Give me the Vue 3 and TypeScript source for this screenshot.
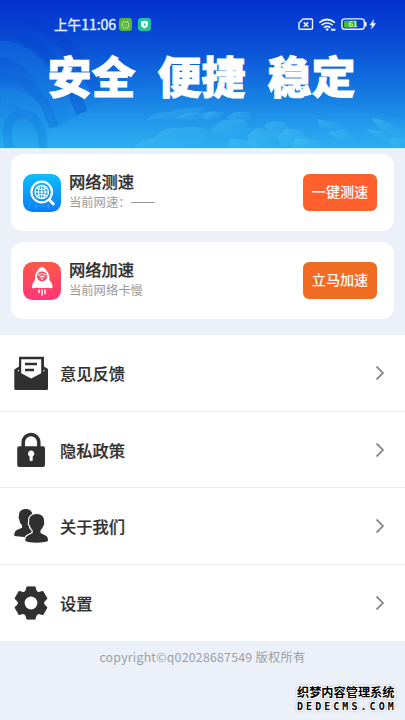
<script setup lang="ts">
type IconName = 'mail' | 'lock' | 'people' | 'gear'

interface MenuItem {
  label: string
  icon: IconName
}

interface Card {
  title: string
  note: string
  dash: string
  action: string
  kind: 'speed' | 'boost'
}

const slogans: string[] = ['安全', '便捷', '稳定']

const cards: Card[] = [
  { title: '网络测速', note: '当前网速：', dash: '——', action: '一键测速', kind: 'speed' },
  { title: '网络加速', note: '当前网络卡慢', dash: '', action: '立马加速', kind: 'boost' },
]

const menu: MenuItem[] = [
  { label: '意见反馈', icon: 'mail' },
  { label: '隐私政策', icon: 'lock' },
  { label: '关于我们', icon: 'people' },
  { label: '设置', icon: 'gear' },
]

const teeth: number[] = [0, 60, 120, 180, 240, 300]

const clouds: string[] = [
  'M132 148 Q142 138 154 138 Q162 126 182 128 Q196 124 210 132 L204 148Z',
  'M146 120 Q156 111 170 112 Q184 106 206 108 Q192 119 170 119Z',
  'M174 119 Q184 111 202 113 L218 110 Q210 121 190 120Z',
  'M201 117 L209 112 L224 112 L220 118 L206 120Z',
  'M210 130 L221 121 L243 119 L252 130 L236 136 L214 134Z',
  'M226 118 L235 112 L250 112 L252 120 L238 123Z',
  'M247 136 L256 128 L271 130 L281 138 L270 148 L251 148Z',
  'M263 126 L272 121 L285 122 L292 133 L278 136Z',
  'M278 136 L286 129 L302 130 L309 141 L298 148 L280 145Z',
  'M317 119 L339 123 L346 129 L332 129 L320 127Z',
  'M328 132 L344 129 L355 135 L354 142 L338 140Z',
  'M371 118 Q384 119 394 126 L405 129 L405 137 L384 133Z',
  'M366 129 L382 131 L391 138 L384 143Z',
  'M388 140 Q397 136 405 138 L405 148 L393 148Z',
  'M293 148 L295 138 L318 141 L326 148Z',
  'M228 148 L230 138 L254 142 L262 148Z',
]
</script>

<template>
  <main class="screen">
    <header class="hero">
      <svg class="hero-art" viewBox="0 0 405 148" preserveAspectRatio="none" aria-hidden="true">
        <defs>
          <linearGradient id="sky" x1="0" y1="0" x2="0" y2="1">
            <stop offset="0" stop-color="#0330cf" />
            <stop offset="0.3" stop-color="#0a4fd6" />
            <stop offset="0.65" stop-color="#157ce2" />
            <stop offset="1" stop-color="#27adf0" />
          </linearGradient>
          <linearGradient id="cloud" x1="0" y1="0" x2="1" y2="1">
            <stop offset="0" stop-color="#6ad4fb" stop-opacity="0.34" />
            <stop offset="1" stop-color="#3bbcf5" stop-opacity="0.03" />
          </linearGradient>
          <linearGradient id="ray" x1="0" y1="0" x2="0" y2="1">
            <stop offset="0" stop-color="#2b9bf0" stop-opacity="0" />
            <stop offset="1" stop-color="#36b5f6" stop-opacity="0.4" />
          </linearGradient>
        </defs>
        <rect width="405" height="148" fill="url(#sky)" />
        <g fill="none">
          <path d="M0 14 Q55 12 97 91" stroke="#0638c6" stroke-opacity="0.25" stroke-width="12" />
          <path d="M0 29 C36 32 64 68 82 113" stroke="#0644c9" stroke-opacity="0.35" stroke-width="12" />
          <path d="M0 49 C32 49 52 85 62 126" stroke="#1982e6" stroke-opacity="0.3" stroke-width="17" />
          <path d="M0 77 C28 75 45 97 54 127" stroke="#0961d3" stroke-opacity="0.28" stroke-width="10" />
          <path d="M0 97 C18 93 30 103 39 117" stroke="#31a3ee" stroke-opacity="0.16" stroke-width="15" />
          <path d="M10 148 C2 125 11 114 24 114 C38 115 44 134 43 148" stroke="#096fd7" stroke-opacity="0.25" stroke-width="9" />
        </g>
        <path d="M48 131 L108 98 L184 73 L405 120 V148 H46Z" fill="url(#ray)" opacity="0.55" />
        <path v-for="(d, i) in clouds" :key="i" :d="d" fill="url(#cloud)" />
      </svg>

      <div class="status">
        <span class="clock">上午<span class="digits">11:06</span></span>
        <svg class="app-dot" viewBox="0 0 13 13" aria-hidden="true">
          <rect width="13" height="13" rx="3" fill="#53b83a" />
          <rect x="3.2" y="4" width="6.6" height="6" rx="2" fill="none" stroke="#b9dd9b" stroke-width="1" />
          <path d="M4.8 7 H5.6 M7.4 7 H8.2 M4 3 L5 4 M9 3 L8 4" stroke="#b9dd9b" />
        </svg>
        <svg class="app-dot second" viewBox="0 0 13 13" aria-hidden="true">
          <rect width="13" height="13" rx="3" fill="#20c49c" />
          <path d="M6.5 2.4 L10 3.8 V7 Q9.6 9.6 6.5 10.8 Q3.4 9.6 3 7 V3.8Z" fill="#f0fffb" />
          <path d="M6 5 L8 6.5 L6 8Z" fill="#20c49c" />
        </svg>
        <svg class="phone-state" viewBox="0 0 82 16" aria-hidden="true">
          <g fill="none" stroke="#edf4ff" stroke-width="1.4">
            <path d="M5 3 H13.5 Q14.5 3 14.5 4 V12.3 Q14.5 13.3 13.5 13.3 H2 Q1 13.3 1 12.3 V7Z" />
            <path d="M5.7 6.4 L10.2 10.8 M10.2 6.4 L5.7 10.8" stroke-width="1.5" />
            <path d="M21.3 6.6 Q29 0.4 36.9 6.6 M23.5 9.2 Q29 4.8 34.7 9.2 M25.9 11.7 Q29 9.2 32.3 11.7" stroke-width="1.7" />
            <rect x="43.8" y="2.9" width="22.6" height="10.4" rx="3" />
          </g>
          <circle cx="29.1" cy="13.5" r="1.3" fill="#edf4ff" />
          <path d="M33 13.7 H37.5" stroke="#edf4ff" stroke-width="2" />
          <rect x="46" y="4.8" width="12.8" height="6.7" rx="1" fill="#43b83c" />
          <path d="M67.7 6 V10.4" stroke="#edf4ff" stroke-width="1.7" />
          <path d="M76 3 L71.5 9.2 H74 L73 13.7 L78.2 7.2 H75.4Z" fill="#edf4ff" />
          <text x="50.6" y="11" font-size="8" font-weight="400" fill="#f8fff8">61</text>
        </svg>
      </div>

      <h1 class="slogan">
        <span v-for="word in slogans" :key="word">{{ word }}</span>
      </h1>
    </header>

    <section class="cards">
      <article v-for="card in cards" :key="card.title" class="card">
        <svg v-if="card.kind === 'speed'" class="app-icon" viewBox="0 0 38 38" aria-hidden="true">
          <defs>
            <linearGradient id="blue" x1="0" y1="0" x2="0" y2="1">
              <stop offset="0" stop-color="#10bdfb" />
              <stop offset="1" stop-color="#087dfb" />
            </linearGradient>
          </defs>
          <rect width="38" height="38" rx="9.5" fill="url(#blue)" />
          <path d="M8 27 L5 35 M13 29 L12 35 M25 29 L26 35 M12 32 H26" stroke="#65bbff" stroke-opacity="0.4" />
          <g fill="none" stroke="#fff">
            <circle cx="18.7" cy="18" r="10.3" stroke-width="2.2" />
            <path d="M26.2 25.8 L30.3 30" stroke-width="3" stroke-linecap="round" />
            <circle cx="18.7" cy="18" r="6.7" stroke-width="1.3" />
            <ellipse cx="18.7" cy="18" rx="3.4" ry="6.7" stroke-width="1.1" />
            <path d="M12 18 H25.4 M18.7 11.3 V24.7 M13.5 14.2 Q18.7 16.7 23.9 14.2 M13.5 21.8 Q18.7 19.3 23.9 21.8" stroke-width="1.1" />
          </g>
        </svg>
        <svg v-else class="app-icon" viewBox="0 0 38 38" aria-hidden="true">
          <defs>
            <linearGradient id="red" x1="0" y1="0" x2="0" y2="1">
              <stop offset="0" stop-color="#ff5848" />
              <stop offset="1" stop-color="#ff3778" />
            </linearGradient>
          </defs>
          <rect width="38" height="38" rx="9.5" fill="url(#red)" />
          <path d="M19 5 Q22 5 25.7 12 Q27 15 26.3 18 Q29.3 20.5 29.7 25 Q28.8 27 26 25.7 Q22 26 19 26 Q15.5 26 12 25.7 Q9 27 8.8 25 Q8.8 21 12 18 Q11.5 14 13 11 Q16 5 19 5Z" fill="#fff" />
          <circle cx="19" cy="14.4" r="5" fill="#ff4b5d" />
          <path d="M15.3 13.2 Q19 10.3 22.7 13.2 M16.7 15.2 Q19 13.4 21.3 15.2" fill="none" stroke="#fff" stroke-width="1.2" />
          <circle cx="19" cy="17" r="0.9" fill="#fff" />
          <path d="M16 28 V30.4 M19 28 V33.2 M22 28 V31.6" stroke="#fff" stroke-width="1.5" stroke-linecap="round" />
        </svg>
        <div class="card-text">
          <h2>{{ card.title }}</h2>
          <p>{{ card.note }}<span v-if="card.dash" class="dash">{{ card.dash }}</span></p>
        </div>
        <button type="button" :class="['action', card.kind]">{{ card.action }}</button>
      </article>
    </section>

    <nav class="menu">
      <a v-for="item in menu" :key="item.label" class="row">
        <svg class="row-icon" viewBox="0 0 36 36" aria-hidden="true">
          <g v-if="item.icon === 'mail'">
            <path d="M2 14 L6 11.5 V1.7 H31 V11.5 L35 14 V33.5 Q35 35 33.5 35 H2.8 Q1.3 35 1.3 33.5 V15.2 Q1.3 14.5 2 14Z" fill="#303030" />
            <path d="M8.2 4.2 H28.2 V18.2 L18.2 23.5 L8.2 18.2Z" fill="#fff" />
            <path d="M12 9 H24 M12 15 H21" stroke="#303030" stroke-width="2.5" />
            <path d="M4.5 15.8 L6 14.8 V16.8Z M32 15.8 L30.5 14.8 V16.8Z" fill="#fff" />
          </g>
          <g v-else-if="item.icon === 'lock'">
            <path d="M10.2 16 V10.5 A7.8 8 0 0 1 25.8 10.5 V16" fill="none" stroke="#303030" stroke-width="3.5" />
            <rect x="4.2" y="14.2" width="27.8" height="20.8" rx="2" fill="#303030" />
            <path d="M16.6 24.5 A3.2 3.2 0 1 1 19.7 24.5 V28.5 Q18.2 30 16.6 28.5Z" fill="#fff" />
          </g>
          <g v-else-if="item.icon === 'people'" fill="#303030">
            <path d="M12.4 1 C17 1 20 3.5 19.5 8.5 Q20.5 10 19 12 Q18 16 16 17.5 V20 L21.5 23 Q24 24.5 24 28.5 Q14 30 1.3 28 Q.9 23.6 3.8 21.9 L9 19.8 V17.3 Q6.5 15 6.2 11.5 Q5 9.5 6 8 C5.6 4 8.3 1 12.4 1Z" />
            <path d="M23.6 6 C28.5 6 31.6 9 31 13.7 Q32 16 30.4 17.8 Q29.8 20.4 27.5 22.2 V25 L33.5 28 Q35.2 29.5 35 33.1 Q31 34.8 23.5 34.8 Q16 34.8 12.3 33.1 Q12 29.5 14 28 L19.7 25 V22.3 Q17.4 20.4 16.9 17.8 Q15.3 16 16.3 13.7 C15.7 9 18.8 6 23.6 6Z" stroke="#fff" stroke-width="2.4" paint-order="stroke" />
          </g>
          <g v-else>
            <circle cx="18" cy="18" r="13.3" fill="#303030" />
            <path v-for="angle in teeth" :key="angle" d="M14 1.9 H22 L23.5 7 H12.5Z" :transform="`rotate(${angle} 18 18)`" fill="#303030" stroke="#303030" stroke-linejoin="round" />
            <circle cx="18" cy="18" r="6.4" fill="#fff" />
          </g>
        </svg>
        <span class="label">{{ item.label }}</span>
        <svg class="chevron" viewBox="0 0 10 16" aria-hidden="true">
          <path d="M1.5 1.5 L8 8 L1.5 14.5" fill="none" stroke="#8c8c8c" stroke-width="1.8" />
        </svg>
      </a>
    </nav>

    <footer class="footer">
      <p class="copyright">copyright©q02028687549 版权所有</p>
      <div class="brand">
        <span class="brand-name">织梦内容管理系统</span>
        <span class="brand-url">DEDECMS.COM</span>
      </div>
    </footer>
  </main>
</template>

<style>
body {
  background: #ecf0f9;
}
</style>

<style scoped>
.screen {
  width: 405px;
  height: 720px;
  overflow: hidden;
  display: flex;
  flex-direction: column;
  background: #ecf0f9;
  font-family: "Noto Sans CJK SC", sans-serif;
  color: #303030;
}

h1,
h2,
p {
  margin: 0;
}

svg {
  display: block;
  flex: none;
}

.hero {
  height: 148px;
  flex: none;
  position: relative;
  border-bottom: 1px solid #d5eefc;
}

.hero-art {
  position: absolute;
  inset: 0;
  width: 100%;
  height: 148px;
}

.status {
  position: relative;
  display: flex;
  align-items: center;
  height: 46px;
  padding: 1px 25px 0 54px;
}

.clock {
  width: 64.5px;
  padding-bottom: 1px;
  white-space: nowrap;
  font-size: 13.6px;
  line-height: 20px;
  color: #edf4ff;
  -webkit-text-stroke: 0.3px #edf4ff;
}

.digits {
  font-size: 14.2px;
  letter-spacing: -0.15px;
}

.app-dot {
  width: 13px;
  height: 13px;
}

.second {
  margin-left: 6px;
}

.phone-state {
  width: 82px;
  height: 16px;
  margin-left: auto;
}

.slogan {
  position: relative;
  display: flex;
  justify-content: center;
  gap: 22px;
  padding-right: 2px;
  font-size: 44px;
  line-height: 56px;
  font-weight: 900;
  color: #fff;
  -webkit-text-stroke: 0.9px #fff;
}

.cards {
  display: flex;
  flex-direction: column;
  gap: 11px;
  padding: 5px 11px 16px;
}

.card {
  display: flex;
  align-items: center;
  height: 77px;
  box-sizing: border-box;
  padding: 0 17px 0 12px;
  border-radius: 12px;
  background: #fff;
}

.app-icon {
  width: 38px;
  height: 38px;
}

.card-text {
  flex: 1;
  margin-left: 8px;
  padding-bottom: 2px;
}

.card-text h2 {
  font-size: 16.3px;
  line-height: 21px;
  font-weight: 500;
  -webkit-text-stroke: 0.25px #303030;
}

.card-text p {
  height: 20px;
  font-size: 12.3px;
  line-height: 20px;
  color: #999;
}

.dash {
  font-size: 15px;
  line-height: 1;
}

.action {
  width: 74px;
  height: 37px;
  padding: 0 0 2px;
  border: 0;
  border-radius: 6px;
  color: #fff;
  font: 500 14.1px/35px "Noto Sans CJK SC", sans-serif;
}

.speed {
  background: #ff602c;
}

.boost {
  background: #f06c23;
}

.menu {
  height: 306px;
  flex: none;
  display: grid;
  grid-template-rows: repeat(4, 1fr);
  background: #fff;
}

.row {
  display: flex;
  align-items: center;
  padding: 1px 20px 0 13px;
  border-bottom: 1px solid #ededed;
}

.row:last-child {
  border-bottom-color: transparent;
}

.row-icon {
  width: 36px;
  height: 36px;
}

.label {
  flex: 1;
  margin-left: 11px;
  font-size: 16.3px;
  line-height: 24px;
  font-weight: 500;
  -webkit-text-stroke: 0.2px #303030;
}

.chevron {
  width: 10px;
  height: 16px;
}

.footer {
  display: flex;
  flex-direction: column;
  padding: 7px 10px 0;
}

.copyright {
  text-align: center;
  font-size: 12.3px;
  line-height: 18px;
  letter-spacing: 0.25px;
  color: #9b9ea5;
}

.brand {
  align-self: flex-end;
  width: 98px;
  margin-top: 18px;
  display: flex;
  flex-direction: column;
  color: #000;
  white-space: nowrap;
  text-shadow: 1px 0 #fff, -1px 0 #fff, 0 1px #fff, 0 -1px #fff, 1px 1px #fff, -1px -1px #fff, 1px -1px #fff, -1px 1px #fff, 0 0 3px #555, 0 0 2px #777;
}

.brand-name {
  font-size: 12.2px;
  line-height: 17px;
  font-weight: 700;
}

.brand-url {
  font: 700 10px/12px "DejaVu Sans Mono", monospace;
  letter-spacing: 3.05px;
}
</style>
